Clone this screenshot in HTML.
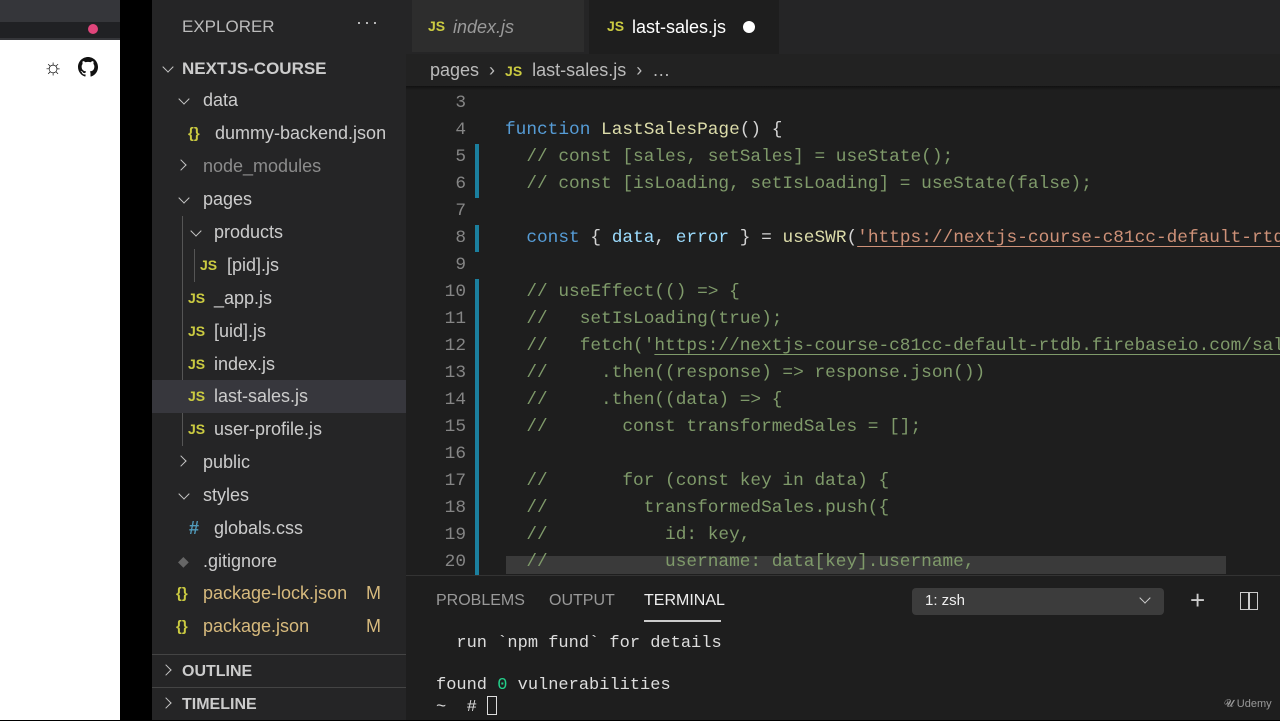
<!DOCTYPE html>
<html><head><meta charset="utf-8"><style>
*{margin:0;padding:0;box-sizing:border-box}
body{width:1280px;height:720px;background:#000;overflow:hidden;position:relative;font-family:"Liberation Sans",sans-serif}
.abs{position:absolute}
#brtop{left:0;top:0;width:120px;height:40px;background:#35363a}
#brwhite{left:0;top:40px;width:120px;height:680px;background:#fff}
#side{left:152px;top:0;width:254px;height:720px;background:#252526;color:#ccc}
#ed{left:406px;top:0;width:874px;height:720px;background:#1e1e1e}
.row{position:absolute;left:0;width:254px;height:33px;line-height:33px;font-size:18px;color:#cccccc;white-space:nowrap}
.chev{display:inline-block;width:8px;height:8px;border-right:1.6px solid #c5c5c5;border-bottom:1.6px solid #c5c5c5;position:absolute;top:11px}
.dn{transform:rotate(45deg)}
.rt{transform:rotate(-45deg)}
.js{color:#cbcb41;font-weight:bold;font-size:14px;position:absolute}
.br{color:#cbcb41;font-weight:bold;font-size:15px;position:absolute}
.code{position:absolute;left:0;font-family:"Liberation Mono",monospace;font-size:17.8px;white-space:pre;height:27px;line-height:27px}
.ln{position:absolute;width:60px;text-align:right;left:0;color:#858585}
.txt{position:absolute;left:99px;color:#d4d4d4}
.c{color:#7f9a6a}
.k{color:#569cd6}
.f{color:#dcdcaa}
.v{color:#9cdcfe}
.s{color:#ce9178;text-decoration:underline;text-underline-offset:4px}
.sc{color:#7f9a6a;text-decoration:underline;text-underline-offset:4px}
.gut{position:absolute;left:69px;width:4px;height:27px;background:#1b7f9e}
</style></head><body>
<div class="abs" id="brtop"></div>
<div class="abs" style="left:0;top:22px;width:120px;height:16px;background:#202124"></div>
<div class="abs" style="left:88px;top:24px;width:10px;height:10px;border-radius:5px;background:#e0457b"></div>
<div class="abs" id="brwhite"></div>
<div class="abs" style="left:43px;top:54px;font-size:22px;color:#111;font-weight:bold">☼</div>
<svg class="abs" style="left:78px;top:57px" width="20" height="20" viewBox="0 0 16 16"><path fill="#111" d="M8 0C3.58 0 0 3.58 0 8c0 3.540 2.29 6.53 5.47 7.59.4.07.55-.17.55-.38v-1.33c-2.23.48-2.7-1.07-2.7-1.07-.36-.92-.89-1.170-.89-1.17-.73-.5.05-.49.05-.49.8.06 1.23.83 1.23.83.72 1.22 1.87.87 2.33.66.07-.52.28-.87.5-1.07-1.78-.2-3.64-.89-3.64-3.95 0-.87.31-1.59.82-2.15-.08-.2-.36-1.02.08-2.12 0 0 .67-.21 2.2.82a7.6 7.6 0 014 0c1.53-1.04 2.2-.82 2.2-.82.44 1.1.16 1.92.08 2.12.51.56.82 1.27.82 2.15 0 3.07-1.87 3.75-3.65 3.95.29.25.54.73.54 1.48v2.2c0 .21.15.46.55.38A8.01 8.01 0 0016 8c0-4.42-3.58-8-8-8z"/></svg>

<div class="abs" id="side">
 <div class="abs" style="left:30px;top:17px;font-size:17px;color:#bbb">EXPLORER</div>
 <div class="abs" style="left:204px;top:12px;font-size:18px;color:#ccc;letter-spacing:2px">···</div>
 <div class="row" style="top:52px;font-weight:bold;font-size:17px"><span class="chev dn" style="left:12px"></span><span style="position:absolute;left:30px">NEXTJS-COURSE</span></div>
 <div class="row" style="top:84px"><span class="chev dn" style="left:28px"></span><span style="position:absolute;left:51px">data</span></div>
 <div class="row" style="top:117px"><span class="br" style="left:36px">{}</span><span style="position:absolute;left:63px">dummy-backend.json</span></div>
 <div class="row" style="top:150px;color:#8c8c8c"><span class="chev rt" style="left:25px"></span><span style="position:absolute;left:51px">node_modules</span></div>
 <div class="row" style="top:183px"><span class="chev dn" style="left:28px"></span><span style="position:absolute;left:51px">pages</span></div>
 <div class="abs" style="left:30px;top:216px;width:1px;height:230px;background:#555"></div>
 <div class="row" style="top:216px"><span class="chev dn" style="left:40px"></span><span style="position:absolute;left:62px">products</span></div>
 <div class="abs" style="left:42px;top:249px;width:1px;height:33px;background:#555"></div>
 <div class="row" style="top:249px"><span class="js" style="left:48px">JS</span><span style="position:absolute;left:75px">[pid].js</span></div>
 <div class="row" style="top:282px"><span class="js" style="left:36px">JS</span><span style="position:absolute;left:62px">_app.js</span></div>
 <div class="row" style="top:315px"><span class="js" style="left:36px">JS</span><span style="position:absolute;left:62px">[uid].js</span></div>
 <div class="row" style="top:348px"><span class="js" style="left:36px">JS</span><span style="position:absolute;left:62px">index.js</span></div>
 <div class="row" style="top:380px;background:#37373d"><span class="js" style="left:36px">JS</span><span style="position:absolute;left:62px">last-sales.js</span></div>
 <div class="row" style="top:413px"><span class="js" style="left:36px">JS</span><span style="position:absolute;left:62px">user-profile.js</span></div>
 <div class="row" style="top:446px"><span class="chev rt" style="left:25px"></span><span style="position:absolute;left:51px">public</span></div>
 <div class="row" style="top:479px"><span class="chev dn" style="left:28px"></span><span style="position:absolute;left:51px">styles</span></div>
 <div class="row" style="top:512px"><span style="position:absolute;left:37px;color:#519aba;font-weight:bold">#</span><span style="position:absolute;left:62px">globals.css</span></div>
 <div class="row" style="top:545px"><span style="position:absolute;left:26px;color:#666;font-size:14px">◆</span><span style="position:absolute;left:51px">.gitignore</span></div>
 <div class="row" style="top:577px;color:#d7ba7d"><span class="br" style="left:24px">{}</span><span style="position:absolute;left:51px">package-lock.json</span><span style="position:absolute;left:214px">M</span></div>
 <div class="row" style="top:610px;color:#d7ba7d"><span class="br" style="left:24px">{}</span><span style="position:absolute;left:51px">package.json</span><span style="position:absolute;left:214px">M</span></div>
 <div class="abs" style="left:0;top:654px;width:254px;height:66px;background:#252526;border-top:1px solid #444"></div>
 <div class="row" style="top:655px;font-weight:bold;font-size:16px"><span class="chev rt" style="left:10px"></span><span style="position:absolute;left:30px">OUTLINE</span></div>
 <div class="abs" style="left:0;top:687px;width:254px;height:1px;background:#444"></div>
 <div class="row" style="top:688px;font-weight:bold;font-size:16px"><span class="chev rt" style="left:10px"></span><span style="position:absolute;left:30px">TIMELINE</span></div>
</div>

<div class="abs" id="ed">
 <div class="abs" style="left:0;top:0;width:874px;height:54px;background:#252526"></div>
 <div class="abs" style="left:6px;top:0;width:172px;height:52px;background:#2d2d2d"></div>
 <div class="abs" style="left:22px;top:18px"><span style="color:#cbcb41;font-weight:bold;font-size:14px">JS</span></div>
 <div class="abs" style="left:47px;top:17px;font-size:18px;color:#9a9a9a;font-style:italic">index.js</div>
 <div class="abs" style="left:183px;top:0;width:190px;height:54px;background:#1e1e1e"></div>
 <div class="abs" style="left:201px;top:18px"><span style="color:#cbcb41;font-weight:bold;font-size:14px">JS</span></div>
 <div class="abs" style="left:226px;top:17px;font-size:18px;color:#fff">last-sales.js</div>
 <div class="abs" style="left:337px;top:21px;width:12px;height:12px;border-radius:6px;background:#fff"></div>
 <div class="abs" style="left:0;top:54px;width:874px;height:34px;background:#222"></div>
 <div class="abs" style="left:24px;top:60px;font-size:18px;color:#bbb;white-space:pre">pages  ›  <span style="color:#cbcb41;font-weight:bold;font-size:14px">JS</span>  last-sales.js  ›  …</div>
 <div class="abs" style="left:0;top:86px;width:874px;height:4px;background:linear-gradient(#111,#1e1e1e)"></div>
 <div class="abs" style="left:100px;top:556px;width:720px;height:18px;background:#3a3a3a"></div>

 <div class="code" style="top:90px"><span class="ln">3</span></div>
 <div class="code" style="top:117px"><span class="ln">4</span><span class="txt"><span class="k">function</span> <span class="f">LastSalesPage</span>() {</span></div>
 <div class="code" style="top:144px"><span class="ln">5</span><span class="gut"></span><span class="txt c">  // const [sales, setSales] = useState();</span></div>
 <div class="code" style="top:171px"><span class="ln">6</span><span class="gut"></span><span class="txt c">  // const [isLoading, setIsLoading] = useState(false);</span></div>
 <div class="code" style="top:198px"><span class="ln">7</span></div>
 <div class="code" style="top:225px"><span class="ln">8</span><span class="gut"></span><span class="txt">  <span class="k">const</span> { <span class="v">data</span>, <span class="v">error</span> } = <span class="f">useSWR</span>(<span class="s">'https://nextjs-course-c81cc-default-rtdb</span></span></div>
 <div class="code" style="top:252px"><span class="ln">9</span></div>
 <div class="code" style="top:279px"><span class="ln">10</span><span class="gut"></span><span class="txt c">  // useEffect(() =&gt; {</span></div>
 <div class="code" style="top:306px"><span class="ln">11</span><span class="gut"></span><span class="txt c">  //   setIsLoading(true);</span></div>
 <div class="code" style="top:333px"><span class="ln">12</span><span class="gut"></span><span class="txt c">  //   fetch('<span class="sc">https://nextjs-course-c81cc-default-rtdb.firebaseio.com/sales</span></span></div>
 <div class="code" style="top:360px"><span class="ln">13</span><span class="gut"></span><span class="txt c">  //     .then((response) =&gt; response.json())</span></div>
 <div class="code" style="top:387px"><span class="ln">14</span><span class="gut"></span><span class="txt c">  //     .then((data) =&gt; {</span></div>
 <div class="code" style="top:414px"><span class="ln">15</span><span class="gut"></span><span class="txt c">  //       const transformedSales = [];</span></div>
 <div class="code" style="top:441px"><span class="ln">16</span><span class="gut"></span></div>
 <div class="code" style="top:468px"><span class="ln">17</span><span class="gut"></span><span class="txt c">  //       for (const key in data) {</span></div>
 <div class="code" style="top:495px"><span class="ln">18</span><span class="gut"></span><span class="txt c">  //         transformedSales.push({</span></div>
 <div class="code" style="top:522px"><span class="ln">19</span><span class="gut"></span><span class="txt c">  //           id: key,</span></div>
 <div class="code" style="top:549px"><span class="ln">20</span><span class="gut"></span><span class="txt c">  //           username: data[key].username,</span></div>

 <div class="abs" style="left:0;top:575px;width:874px;height:145px;background:#1e1e1e;border-top:1px solid #333"></div>
 <div class="abs" style="left:30px;top:592px;font-size:16px;color:#999">PROBLEMS</div>
 <div class="abs" style="left:143px;top:592px;font-size:16px;color:#999">OUTPUT</div>
 <div class="abs" style="left:238px;top:592px;font-size:16px;color:#eee">TERMINAL</div>
 <div class="abs" style="left:238px;top:620px;width:77px;height:2px;background:#ccc"></div>
 <div class="abs" style="left:506px;top:588px;width:252px;height:27px;background:#3c3c3c;border-radius:4px"></div>
 <div class="abs" style="left:519px;top:592px;font-size:15px;color:#eee">1: zsh</div>
 <div class="abs" style="left:735px;top:594px;width:8px;height:8px;border-right:1.6px solid #ccc;border-bottom:1.6px solid #ccc;transform:rotate(45deg)"></div>
 <div class="abs" style="left:784px;top:585px;font-size:26px;color:#ccc">+</div>
 <div class="abs" style="left:834px;top:592px;width:18px;height:18px;border:1.6px solid #ccc"></div>
 <div class="abs" style="left:842px;top:592px;width:1.6px;height:18px;background:#ccc"></div>
 <div class="abs" style="left:30px;top:633px;font-family:'Liberation Mono',monospace;font-size:17px;color:#ddd;white-space:pre;line-height:21px">  run `npm fund` for details<br><br>found <span style="color:#23d18b">0</span> vulnerabilities<br>~  # <span style="display:inline-block;width:10px;height:19px;border:1.5px solid #ddd;vertical-align:-4px"></span></div>
 <div class="abs" style="left:818px;top:698px;font-size:11px;color:#999">𝓤 Udemy</div>
</div>
</body></html>
